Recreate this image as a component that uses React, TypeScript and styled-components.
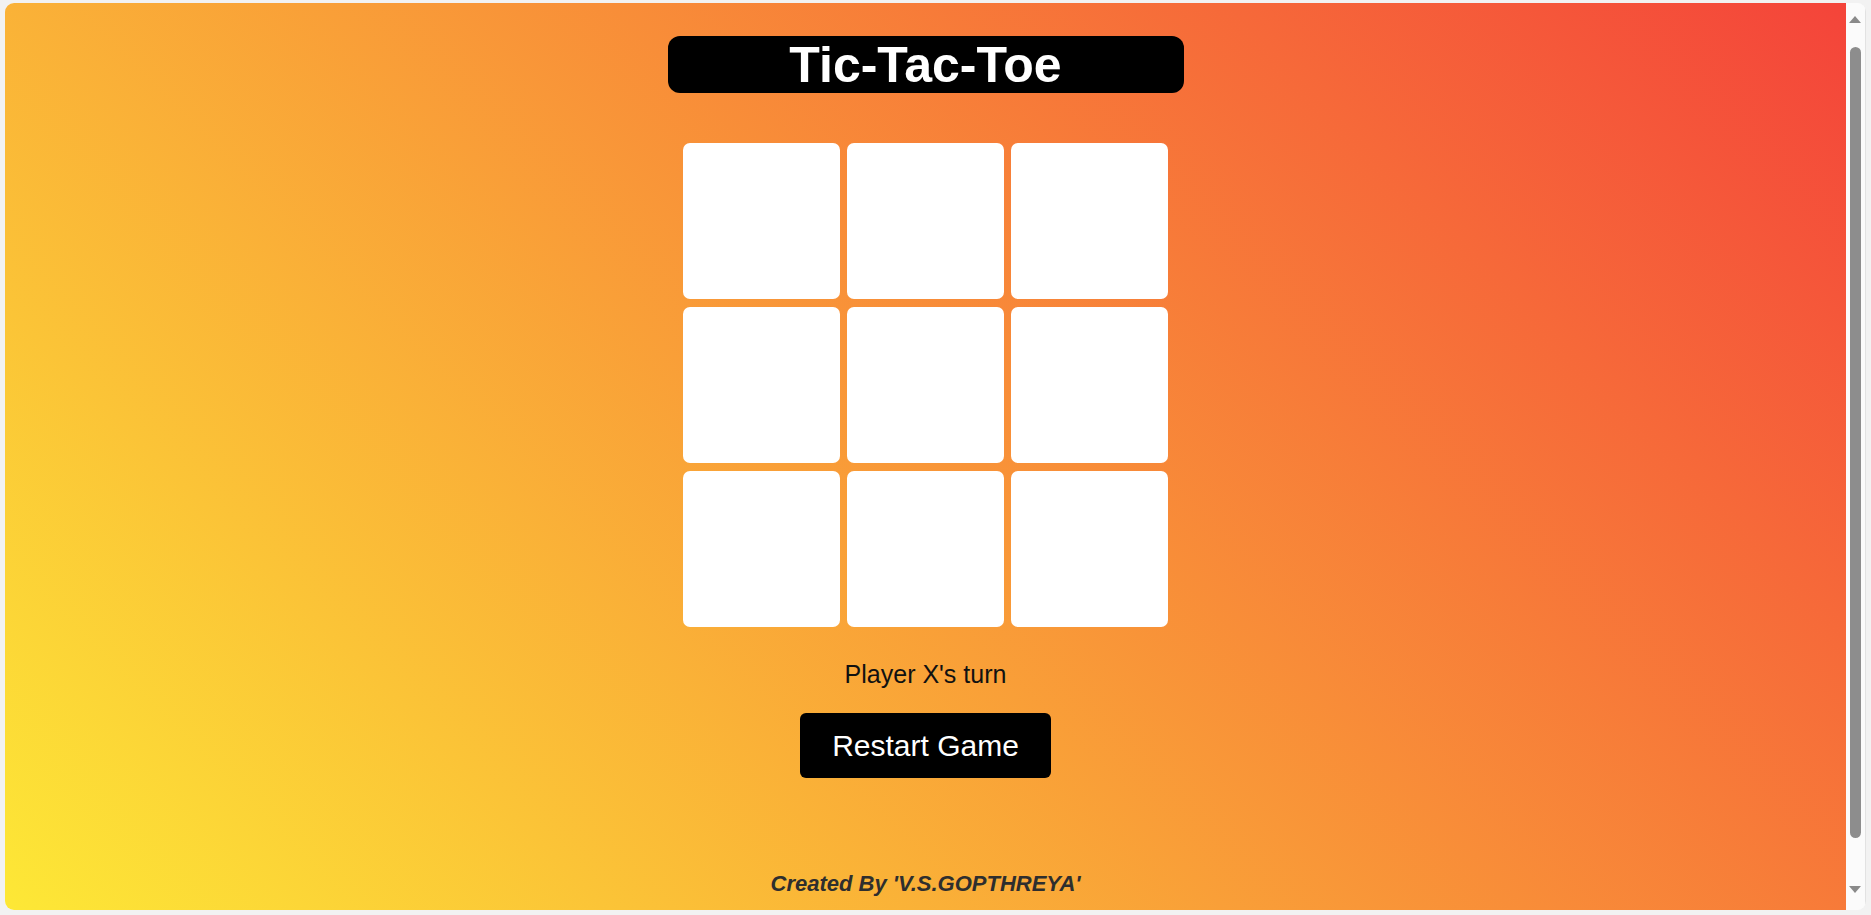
import React, { useState } from "react";
import styled, { createGlobalStyle } from "styled-components";

const GlobalStyle = createGlobalStyle`
  html, body {
    margin: 0;
    padding: 0;
    height: 100%;
    overflow: hidden;
    background: #f2f2f2;
    font-family: "Liberation Sans", Arial, sans-serif;
  }
  * { box-sizing: border-box; }
`;

const Frame = styled.div`
  display: flex;
  height: 907px;
  margin: 3px 5px 5px 5px;
  border-radius: 9px;
  overflow: hidden;
  background: #fbfbfb;
`;

const Page = styled.main`
  flex: 1;
  display: flex;
  flex-direction: column;
  align-items: center;
  padding-top: 33px;
  background: linear-gradient(45deg, #fde836 0%, #f4443a 100%);
`;

const Title = styled.h1`
  margin: 0;
  width: 516px;
  height: 57px;
  line-height: 59px;
  text-align: center;
  background: #000;
  color: #fff;
  border-radius: 12px;
  font-family: "Liberation Sans", Arial, sans-serif;
  font-weight: 700;
  font-size: 50px;
`;

const Board = styled.div`
  margin-top: 50px;
  display: grid;
  grid-template-columns: repeat(3, 157px);
  grid-template-rows: repeat(3, 156px);
  gap: 8px 7px;
`;

const Cell = styled.button`
  border: none;
  padding: 0;
  background: #fff;
  border-radius: 7px;
  font-family: "Liberation Sans", Arial, sans-serif;
  font-size: 72px;
  font-weight: 700;
  color: #000;
  cursor: pointer;
`;

const Status = styled.p`
  margin: 33px 0 0;
  font-family: "Liberation Sans", Arial, sans-serif;
  font-size: 25px;
  color: #111;
`;

const RestartButton = styled.button`
  margin-top: 24px;
  height: 65px;
  padding: 0 32px;
  border: none;
  border-radius: 6px;
  background: #000;
  color: #fff;
  font-family: "Liberation Sans", Arial, sans-serif;
  font-size: 30px;
  cursor: pointer;
`;

const Footer = styled.footer`
  margin-top: auto;
  padding-bottom: 13px;
  font-family: "Liberation Sans", Arial, sans-serif;
  font-size: 22px;
  font-weight: 700;
  font-style: italic;
  color: #2e2e2e;
`;

const ScrollBar = styled.div`
  width: 20px;
  display: flex;
  flex-direction: column;
  align-items: center;
  background: #fbfbfb;
  border-right: 1px solid #e2e2e2;
  padding: 10px 1px 17px 0;
`;

const Arrow = styled.div<{ $down?: boolean }>`
  width: 0;
  height: 0;
  border-left: 6px solid transparent;
  border-right: 6px solid transparent;
  ${(p) =>
    p.$down
      ? "border-top: 7px solid #8a8a8a;"
      : "border-bottom: 7px solid #8a8a8a;"}
  margin: ${(p) => (p.$down ? "48px 0 0" : "3px 0 24px")};
`;

const Thumb = styled.div`
  width: 11px;
  height: 792px;
  border-radius: 6px;
  background: #8d8d8d;
`;

export default function App() {
  const [cells, setCells] = useState<(string | null)[]>(Array(9).fill(null));
  const [player, setPlayer] = useState<"X" | "O">("X");

  const play = (i: number) => {
    if (cells[i]) return;
    const next = cells.slice();
    next[i] = player;
    setCells(next);
    setPlayer(player === "X" ? "O" : "X");
  };

  const restart = () => {
    setCells(Array(9).fill(null));
    setPlayer("X");
  };

  return (
    <>
      <GlobalStyle />
      <Frame>
        <Page>
          <Title>Tic-Tac-Toe</Title>
          <Board>
            {cells.map((c, i) => (
              <Cell key={i} onClick={() => play(i)}>
                {c}
              </Cell>
            ))}
          </Board>
          <Status>Player {player}'s turn</Status>
          <RestartButton onClick={restart}>Restart Game</RestartButton>
          <Footer>Created By 'V.S.GOPTHREYA'</Footer>
        </Page>
        <ScrollBar>
          <Arrow />
          <Thumb />
          <Arrow $down />
        </ScrollBar>
      </Frame>
    </>
  );
}
